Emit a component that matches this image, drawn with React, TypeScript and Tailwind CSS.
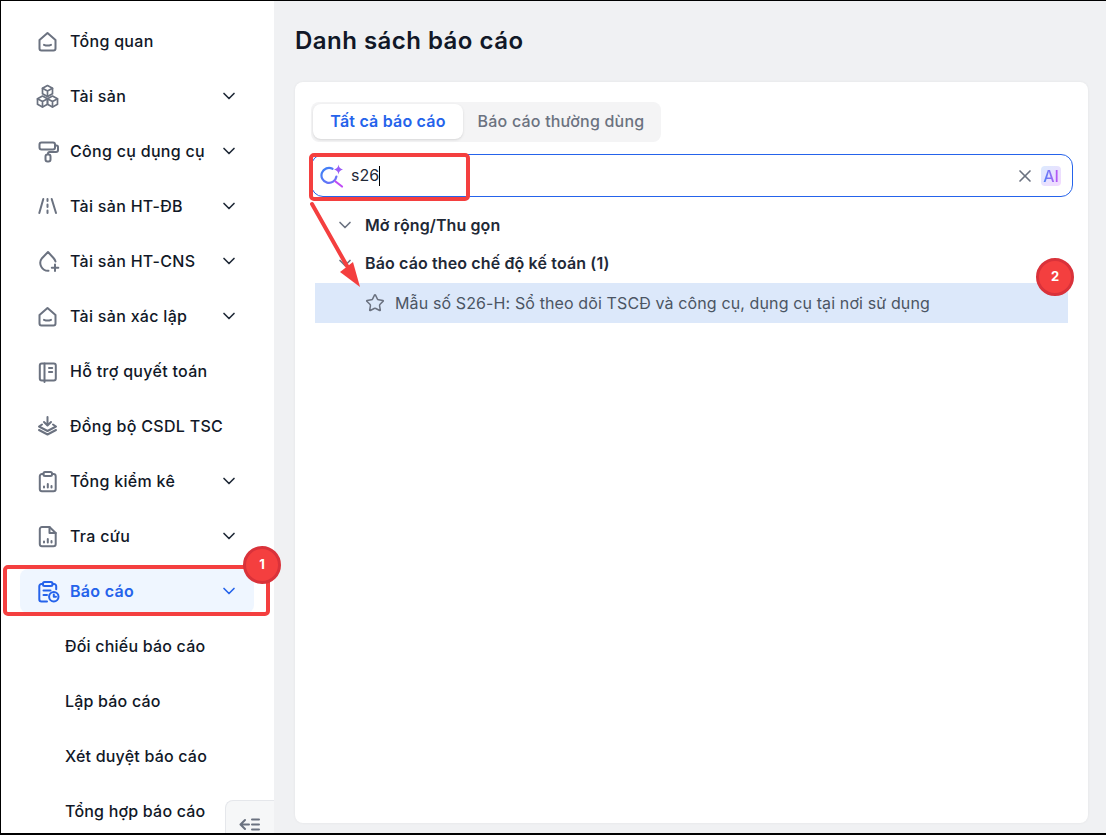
import { ChevronDown, Star, X } from 'lucide-react';
import type { ReactNode } from 'react';

const iconProps = {
  width: 24,
  height: 24,
  viewBox: '0 0 24 24',
  fill: 'none',
  stroke: 'currentColor',
  strokeWidth: 2,
  strokeLinecap: 'round' as const,
  strokeLinejoin: 'round' as const,
};

const HomeIcon = () => (
  <svg {...iconProps}>
    <path d="M3.500 11 11.500 4l8 7v8.500a2 2 0 0 1-2 2h-12a2 2 0 0 1-2-2z" />
    <path d="M8 15.800c2.200 1 4.800 1 7 0" />
  </svg>
);

const BoxesIcon = () => (
  <svg {...iconProps} strokeWidth={1.7}>
    <path d="m11.500 1.500 5 2.800v5.400l-5 2.800-5-2.800V4.300z" />
    <path d="m6.500 12 5 2.800v5.400l-5 2.800-5-2.800v-5.400z" />
    <path d="m16.500 12 5 2.800v5.400l-5 2.800-5-2.800v-5.400z" />
    <path d="m6.500 4.300 5 2.800 5-2.800M11.500 7.100v5.400M1.500 14.800l5 2.800 5-2.800 5 2.800 5-2.800M6.500 17.600V23M16.500 17.600V23" />
  </svg>
);

const RollerIcon = () => (
  <svg {...iconProps}>
    <rect x="3.500" y="3.500" width="15.500" height="7" rx="2" />
    <path d="M19 6.500h1.500a1.500 1.500 0 0 1 1.500 1.500v3a2 2 0 0 1-2 2h-6.500a1.500 1.500 0 0 0-1.500 1.500" />
    <rect x="9.500" y="15.500" width="5" height="7" rx="2" />
  </svg>
);

const RoadIcon = () => (
  <svg {...iconProps}>
    <path d="M7.300 5 3.300 19M15.700 5l4.300 14M11.500 5v2M11.500 10.500v2.500M11.500 16.500V19" />
  </svg>
);

const DropPlusIcon = () => (
  <svg {...iconProps}>
    <path d="M12.500 21.800a7.800 7.800 0 0 1-6.500-12.600L12 3l5.500 6c.9 1 1.600 2.200 2 3.500" />
    <path d="M19 15.500v6.500M15.800 18.800h6.500" />
  </svg>
);

const BookIcon = () => (
  <svg {...iconProps}>
    <rect x="3.800" y="4.500" width="16" height="17" rx="2" />
    <path d="M8.500 4.500v17M13 9h3.200M13 13h3.200M8.500 21.500v1.500" />
  </svg>
);

const LayersDownIcon = () => (
  <svg {...iconProps}>
    <path d="M11.500 3v8M8 8l3.500 3.500L15 8" />
    <path d="M6 10.500 3 12.500l8.500 4.500 8.500-4.500-3-2" />
    <path d="m3 16 8.500 4.500L20 16" />
  </svg>
);

const ClipboardChartIcon = () => (
  <svg {...iconProps}>
    <path d="M7.500 5H6a2.200 2.200 0 0 0-2.200 2.200v13A2.200 2.200 0 0 0 6 22.300h11.500a2.200 2.200 0 0 0 2.200-2.200v-13A2.200 2.200 0 0 0 17.500 5H16" />
    <rect x="7.500" y="3" width="8.500" height="4" rx="1.500" />
    <path d="M8 18.500v-1M11.800 18.500v-3.500M15.500 18.500v-1.500" />
  </svg>
);

const FileChartIcon = () => (
  <svg {...iconProps}>
    <path d="M13.500 3H6a2.200 2.200 0 0 0-2.200 2.200v15A2.200 2.200 0 0 0 6 22.300h11.500a2.200 2.200 0 0 0 2.200-2.200V9z" />
    <path d="M13.500 3v6h6.200" />
    <path d="M8 18.500v-1M11.800 18.500v-3.500M15.500 18.500v-1.500" />
  </svg>
);

const ClipboardClockIcon = () => (
  <svg {...iconProps}>
    <path d="M7 5H5.500A2.200 2.200 0 0 0 3.300 7.200v13a2.200 2.200 0 0 0 2.200 2.200H11M16.500 5H18a2.200 2.200 0 0 1 2.200 2.200v3" />
    <rect x="7" y="3" width="9.500" height="4" rx="1.500" />
    <path d="M7.500 11.500h7M7.500 16H11" />
    <circle cx="17.800" cy="17.800" r="4.700" />
    <path d="M17.800 15.500v2.300h2.200" />
  </svg>
);

const menu: { label: string; icon: ReactNode; chevron?: boolean }[] = [
  { label: 'Tổng quan', icon: <HomeIcon /> },
  { label: 'Tài sản', icon: <BoxesIcon />, chevron: true },
  { label: 'Công cụ dụng cụ', icon: <RollerIcon />, chevron: true },
  { label: 'Tài sản HT-ĐB', icon: <RoadIcon />, chevron: true },
  { label: 'Tài sản HT-CNS', icon: <DropPlusIcon />, chevron: true },
  { label: 'Tài sản xác lập', icon: <HomeIcon />, chevron: true },
  { label: 'Hỗ trợ quyết toán', icon: <BookIcon /> },
  { label: 'Đồng bộ CSDL TSC', icon: <LayersDownIcon /> },
  { label: 'Tổng kiểm kê', icon: <ClipboardChartIcon />, chevron: true },
  { label: 'Tra cứu', icon: <FileChartIcon />, chevron: true },
];

const subMenu = ['Đối chiếu báo cáo', 'Lập báo cáo', 'Xét duyệt báo cáo', 'Tổng hợp báo cáo'];

function Badge({ value, className }: { value: string; className: string }) {
  return (
    <div
      className={`absolute flex h-[38px] w-[38px] items-center justify-center rounded-full border-[3px] border-[#d9323a] bg-[#f43f3f] text-[13px] font-bold text-white ${className}`}
    >
      {value}
    </div>
  );
}

export default function App() {
  return (
    <div className="relative flex h-[835px] w-[1106px] overflow-hidden border-b-2 border-l border-t border-black bg-[#f0f1f3] font-['Inter',sans-serif] text-[16px] text-[#111827]">
      <aside className="relative h-full w-[273px] shrink-0 overflow-hidden bg-white pt-[18px]">
        {menu.map((item) => (
          <div key={item.label} className="mb-[11px] flex h-[44px] items-center pl-[35px] pr-[35px]">
            <span className="flex w-[34px] shrink-0 text-[#6b7280]">{item.icon}</span>
            <span className="flex-1 whitespace-nowrap font-medium tracking-[0.3px]">{item.label}</span>
            {item.chevron && <ChevronDown size={20} strokeWidth={2} className="text-[#1f2937]" />}
          </div>
        ))}
        <div className="mb-[11px] ml-[19px] mr-[20px] flex h-[44px] items-center rounded-lg bg-[#eff6ff] pl-[16px] pr-[15px] text-[#2563eb]">
          <span className="flex w-[34px] shrink-0">
            <ClipboardClockIcon />
          </span>
          <span className="flex-1 font-semibold tracking-[0.3px]">Báo cáo</span>
          <ChevronDown size={20} strokeWidth={2} />
        </div>
        {subMenu.map((label) => (
          <div key={label} className="mb-[11px] flex h-[44px] items-center pl-[64px] font-medium tracking-[0.2px]">
            {label}
          </div>
        ))}
        <div className="absolute bottom-0 right-0 flex h-[33px] w-[49px] items-end justify-center rounded-tl-lg border-l border-t border-[#e5e7eb] bg-[#f6f7f8] text-[#6b7280]">
          <svg width="24" height="16" viewBox="0 0 24 16" fill="none" stroke="currentColor" strokeWidth="2" strokeLinecap="round" strokeLinejoin="round">
            <path d="M7 3 2.500 7.500 7 12M3 7.500h8M14 2.500h7M14 7.500h7M14 12.500h7" />
          </svg>
        </div>
      </aside>

      <main className="flex min-w-0 flex-1 flex-col px-[21px] pt-[23px]">
        <h1 className="mb-[24px] h-[34px] text-[24px] font-semibold leading-[34px] tracking-[0.47px] text-[#111827]">Danh sách báo cáo</h1>
        <section className="h-[741px] w-[793px] rounded-lg bg-white px-[16px] pt-[20px] shadow-[0_0_3px_rgba(0,0,0,0.06)]">
          <div className="flex h-[40px] w-[350px] items-start rounded-lg bg-[#f4f4f5] p-[2px]">
            <div className="flex h-[35px] w-[150px] items-center justify-center rounded-lg bg-white pb-px font-semibold tracking-[0.2px] text-[#2563eb] shadow-sm">
              Tất cả báo cáo
            </div>
            <div className="flex h-[35px] flex-1 items-center justify-center pb-px font-medium tracking-[0.2px] text-[#6b7280]">
              Báo cáo thường dùng
            </div>
          </div>

          <div className="mt-[12px] flex h-[43px] w-[762px] items-center rounded-xl border border-[#2563eb] pl-[8px] pr-[11px]">
            <svg width="26" height="26" viewBox="0 0 26 26" fill="none" strokeWidth="2.200" strokeLinecap="round">
              <defs>
                <linearGradient id="ringGrad" x1="2" y1="5" x2="18" y2="21" gradientUnits="userSpaceOnUse">
                  <stop offset="0" stopColor="#3b82f6" />
                  <stop offset="1" stopColor="#7c6cf8" />
                </linearGradient>
              </defs>
              <path d="M12.500 5.800A7.500 7.500 0 1 0 16.400 13.500" stroke="url(#ringGrad)" />
              <path d="m15.500 18.500 6.500 5" stroke="#c04cf5" />
              <path d="M18.500 1.500c.5 3 1.500 4.200 4.500 5-3 .8-4 2-4.500 5-.5-3-1.500-4.200-4.500-5 3-.8 4-2 4.500-5z" fill="#9b5cf6" stroke="none" />
            </svg>
            <span className="ml-[5px] pb-px text-[#1f2937]">s26</span>
            <span className="h-[20px] w-px bg-black" />
            <X size={20} strokeWidth={2} className="ml-auto text-[#6b7280]" />
            <span className="ml-[6px] flex h-[20px] w-[20px] items-center justify-center rounded bg-gradient-to-br from-[#dbeafe] to-[#f3d9ff] text-[16px] font-medium leading-none">
              <span className="bg-gradient-to-r from-[#3b82f6] to-[#c04cf5] bg-clip-text text-transparent">AI</span>
            </span>
          </div>

          <div className="ml-[4px] mt-[9px] flex h-[38px] items-center font-semibold tracking-[0.1px] text-[#1f2937]">
            <ChevronDown size={20} strokeWidth={2} className="ml-[20px] mr-[10px] text-[#6b7280]" />
            Mở rộng/Thu gọn
          </div>
          <div className="mb-px ml-[4px] flex h-[38px] items-center font-semibold tracking-[0.13px] text-[#1f2937]">
            <ChevronDown size={20} strokeWidth={2} className="ml-[20px] mr-[10px] text-[#6b7280]" />
            Báo cáo theo chế độ kế toán (1)
          </div>
          <div className="ml-[4px] flex h-[40px] w-[753px] items-center bg-[#dce8fa] pl-[50px] tracking-[0.12px] text-[#4b5563]">
            <Star size={20} strokeWidth={1.8} className="mr-[10px] text-[#6b7280]" />
            Mẫu số S26-H: Sổ theo dõi TSCĐ và công cụ, dụng cụ tại nơi sử dụng
          </div>
        </section>
      </main>

      {/* annotations drawn on top of the screenshot */}
      <div className="absolute left-[2px] top-[564px] h-[51px] w-[267px] rounded-[5px] border-4 border-[#f43f3f]" />
      <div className="absolute left-[308px] top-[152px] h-[48px] w-[161px] rounded-[5px] border-4 border-[#f43f3f]" />
      <svg className="absolute left-[300px] top-[195px]" width="70" height="100" viewBox="0 0 70 100" fill="none">
        <path d="M11 8 46 70" stroke="#f43f3f" strokeWidth="4" strokeLinecap="round" />
        <path d="M59 91 39 76 52 66z" fill="#f43f3f" />
      </svg>
      <Badge value="1" className="left-[242px] top-[545px]" />
      <Badge value="2" className="left-[1035px] top-[257px]" />
    </div>
  );
}
